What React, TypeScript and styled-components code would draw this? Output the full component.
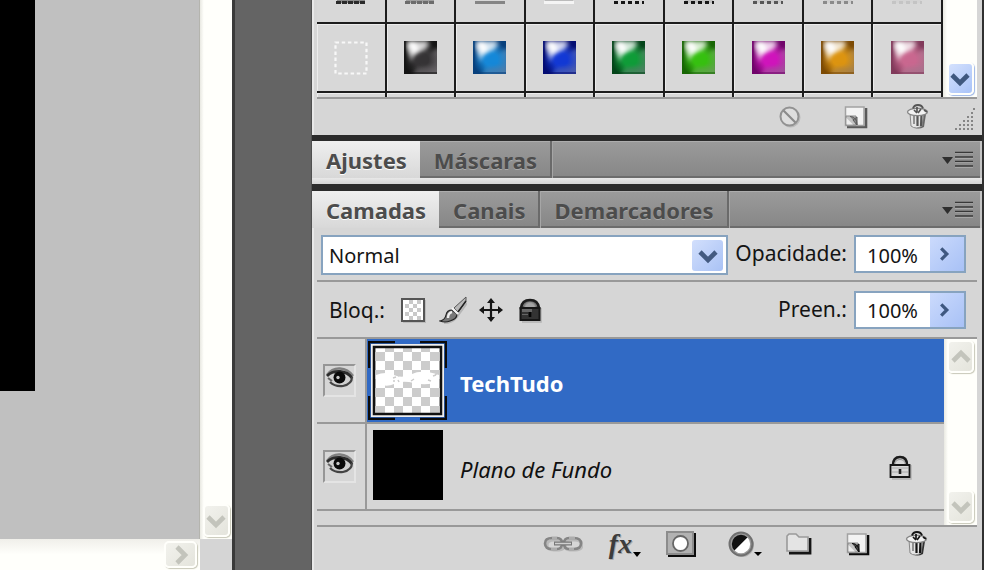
import React from "react";
import styled, { createGlobalStyle, css } from "styled-components";

const GlobalStyle = createGlobalStyle`
  *, *::before, *::after { box-sizing: border-box; }
  body {
    margin: 0;
    background: #646464;
    color: #141414;
    font-family: "Noto Sans", "Open Sans", sans-serif;
    font-size: 20px;
  }
  button, input, select { font: inherit; color: inherit; }
  svg { display: block; flex: none; }
`;

/* ---------- page frame ---------- */

const Page = styled.div`
  display: grid;
  grid-template-columns: minmax(0, 232fr) 80px minmax(0, 672fr);
  min-height: 100vh;
`;

const Workspace = styled.main`
  display: grid;
  grid-template-columns: minmax(0, 1fr) 32px;
  grid-template-rows: minmax(0, 1fr) 31px;
  background: #d5d5d5;
`;

const Canvas = styled.div`
  background: #c0c0c0;
  border-right: 1px solid #b4b4ae;
`;

const Artwork = styled.div`
  width: 35px;
  height: 391px;
  background: #000;
`;

const Gutter = styled.div`
  background: #646464;
  border-left: 3px solid #3a3a3a;
  border-right: 1px solid #505050;
`;

const Dock = styled.aside`
  display: flex;
  flex-direction: column;
  min-width: 0;
  background: #2b2b2b;
  border-right: 2px solid #303030;
`;

/* ---------- scroll bars ---------- */

const ScrollTrack = styled.div<{ $horizontal?: boolean; $end?: "both" }>`
  display: flex;
  flex-direction: ${(p) => (p.$horizontal ? "row" : "column")};
  justify-content: ${(p) => (p.$end ? "space-between" : "flex-end")};
  align-items: center;
  padding: ${(p) => (p.$horizontal ? "0 3px 0 0" : "1px 0 2px")};
  background: ${(p) =>
    p.$horizontal
      ? "linear-gradient(#f0efea, #fffffb 50%)"
      : "linear-gradient(90deg, #e9e9e2, #fffffb 12%, #fffffb)"};
`;

const ScrollButton = styled.button<{ $active?: boolean; $wide?: boolean }>`
  display: grid;
  place-items: center;
  width: ${(p) => (p.$wide ? "33px" : "27px")};
  height: ${(p) => (p.$wide ? "27px" : "33px")};
  padding: 0;
  border: 2px solid #fffffb;
  border-radius: 5px;
  color: ${(p) => (p.$active ? "#3f587f" : "#c3c4bc")};
  background: ${(p) =>
    p.$active
      ? "linear-gradient(135deg, #d4e1fd, #a9c3f8)"
      : "linear-gradient(135deg, #f2f2ed, #e4e4dc)"};
  box-shadow: 1px 1px 1px ${(p) => (p.$active ? "#9db6e6" : "#c8c8b8")};
`;

const turns = { down: 0, left: 90, up: 180, right: 270 };

function Chevron({ to, size = 20 }: { to: keyof typeof turns; size?: number }) {
  return (
    <svg width={size} height={size} viewBox="0 0 20 20" aria-hidden="true">
      <path
        d="M2 6 L10 14 L18 6"
        fill="none"
        stroke="currentColor"
        strokeWidth="4.6"
        transform={`rotate(${turns[to]} 10 10)`}
      />
    </svg>
  );
}

/* ---------- panels and tabs ---------- */

const Panel = styled.section<{ $grow?: boolean; $gap?: number }>`
  display: flex;
  flex-direction: column;
  flex: ${(p) => (p.$grow ? "1" : "none")};
  margin-bottom: ${(p) => p.$gap ?? 0}px;
  background: #d6d6d6;
`;

const PanelBody = styled.div`
  display: flex;
  flex-direction: column;
  flex: 1;
  padding: 0 5px 0 3px;
  border-left: 2px solid #e8e8e8;
`;

const TabBar = styled.div`
  display: flex;
  height: 37px;
  background: linear-gradient(#9b9b9b, #868686);
  border-right: 2px solid #c4c4c4;
  box-shadow: inset 0 1px #adadad, inset 0 -2px #6c6c6c;
`;

const Tab = styled.button<{ $active?: boolean }>`
  padding: 0 13px 0 14px;
  border: 0;
  border-right: 2px solid #6a6a6a;
  background: none;
  color: #4c4c4c;
  font-size: 22px;
  font-weight: 700;
  line-height: 36px;
  white-space: nowrap;
  text-shadow: 0 1px #a9a9a9;
  box-shadow: 1px 0 #a6a6a6;
  ${(p) =>
    p.$active &&
    css`
      border-right: 0;
      background: linear-gradient(#efefef, #d8d8d8);
      text-shadow: 0 1px #fff;
      box-shadow: none;
    `}
`;

const MenuButton = styled.button`
  margin-left: auto;
  padding: 0 7px;
  border: 0;
  background: none;
`;

const CollapsedStrip = styled.div`
  height: 6px;
  background: linear-gradient(#e8e8e8, #d4d4d4);
`;

function TabHeader({ tabs }: { tabs: string[] }) {
  return (
    <TabBar role="tablist">
      {tabs.map((name, i) => (
        <Tab key={name} role="tab" aria-selected={i === 0} $active={i === 0}>
          {name}
        </Tab>
      ))}
      <MenuButton aria-label="Menu do painel">
        <svg width="31" height="18" viewBox="0 0 31 18">
          <path d="M0 6h11l-5.500 7z" fill="#2e2e2e" />
          <path d="M13 2.500h18M13 7h18M13 11.500h18M13 16h18" stroke="#c0c0c0" strokeWidth="1" />
          <path d="M13 1.500h18M13 6h18M13 10.500h18M13 15h18" stroke="#383838" strokeWidth="1.700" />
        </svg>
      </MenuButton>
    </TabBar>
  );
}

/* ---------- styles grid ---------- */

const StylesArea = styled.div`
  display: grid;
  grid-template-columns: minmax(0, 1fr) 34px;
  border-bottom: 2px solid #999;
`;

const SwatchGrid = styled.div`
  display: grid;
  grid-template-columns: repeat(9, minmax(0, 1fr));
  grid-template-rows: 24px 69px 4px;
`;

const Swatch = styled.button<{ $cut?: "top" | "bottom" }>`
  display: flex;
  justify-content: center;
  align-items: ${(p) => (p.$cut === "top" ? "flex-start" : "center")};
  padding: 0;
  border: solid #1c1c1c;
  border-width: ${(p) => (p.$cut === "bottom" ? "0 2px 0 0" : "0 2px 2px 0")};
  background: #d8d8d8;
  box-shadow: inset 1px 1px ${(p) => (p.$cut === "top" ? "#d8d8d8" : "#ececec")};
`;

const gems = [
  { name: "Cinza", mid: "#353335", edge: "#141414", low: "#666366" },
  { name: "Azul", mid: "#1588d8", edge: "#07407c", low: "#4a7cab" },
  { name: "Azul-escuro", mid: "#1238d4", edge: "#030d72", low: "#4a5cae" },
  { name: "Verde", mid: "#0f9c38", edge: "#03451a", low: "#4d8062" },
  { name: "Verde-claro", mid: "#36c010", edge: "#176604", low: "#62a050" },
  { name: "Magenta", mid: "#cf14bb", edge: "#71046b", low: "#a0509a" },
  { name: "Laranja", mid: "#dc9410", edge: "#7d4b04", low: "#a58048" },
  { name: "Rosa", mid: "#c9678f", edge: "#823a5b", low: "#a8728c" },
];

function Gem({ index }: { index: number }) {
  const g = gems[index];
  return (
    <svg width="33" height="33" viewBox="0 0 33 33" aria-hidden="true">
      <defs>
        <radialGradient id={`glow${index}`} cx="0.550" cy="0.560" r="0.550">
          <stop offset="0" stopColor={g.mid} />
          <stop offset="0.350" stopColor={g.mid} />
          <stop offset="1" stopColor={g.mid} stopOpacity="0" />
        </radialGradient>
        <filter id={`soft${index}`} x="-0.300" y="-0.300" width="1.600" height="1.600">
          <feGaussianBlur stdDeviation="2" />
        </filter>
        <clipPath id={`clip${index}`}>
          <path d="M0 0h33v33H0z" />
        </clipPath>
      </defs>
      <g clipPath={`url(#clip${index})`}>
        <path d="M0 0h33v33H0z" fill={g.edge} />
        <g filter={`url(#soft${index})`}>
          <path d="M10 33L16 18 32 8h4v28H8z" fill={g.low} />
          <path d="M2 3h24L20 13l-8 6-5 2z" fill="#fff" opacity="0.650" />
        </g>
        <path d="M0 0h33v33H0z" fill={`url(#glow${index})`} />
        <g filter={`url(#soft${index})`}>
          <path d="M3 0h22l-5 9-9 3-3 6-3-8z" fill="#fff" opacity="0.700" />
          <path d="M3 1h8l5 9-6 4z" fill="#fff" opacity="0.900" />
          <path d="M12 33l4-7h17v7z" fill={g.low} opacity="0.500" />
        </g>
        <path d="M1 0v32h32" fill="none" stroke={g.edge} strokeOpacity="0.550" strokeWidth="2" />
      </g>
    </svg>
  );
}

const fringes = [
  { stroke: "#2a2a2a", dash: "5 1", back: "#8a8a8a" },
  { stroke: "#6c6c6c", dash: "5 1", back: "#a0a0a0" },
  { stroke: "#858585", dash: "30 0", back: "#d8d8d8" },
  { stroke: "#f4f4f4", dash: "30 1", back: "#bbb" },
  { stroke: "#161616", dash: "4 3", back: "#d8d8d8" },
  { stroke: "#161616", dash: "4 3", back: "#c2c2c2" },
  { stroke: "#565656", dash: "4 3", back: "#c9c9c9" },
  { stroke: "#8a8a8a", dash: "4 3", back: "#cfcfcf" },
  { stroke: "#c4c4c4", dash: "4 3", back: "#d4d4d4" },
];

const ToolStrip = styled.div`
  display: flex;
  justify-content: flex-end;
  align-items: center;
  height: 36px;
`;

const IconButton = styled.button<{ $width?: number }>`
  display: grid;
  place-items: center;
  width: ${(p) => p.$width ?? 59}px;
  height: 32px;
  padding: 0;
  border: 0;
  background: none;
`;

/* ---------- icons ---------- */

function NewIcon({ dim }: { dim?: boolean }) {
  const dark = dim ? "#5a5a5a" : "#0c0c0c";
  return (
    <svg width="24" height="24" viewBox="0 0 24 24" aria-hidden="true">
      <path d="M3 22h19V3" fill="none" stroke={dark} strokeWidth="2.600" />
      <path d="M1.500 2h18.500v18.500h-18.500z" fill="#f3f3f3" stroke="#a2a2a2" strokeWidth="1.500" />
      <path d="M2 11h10v9H2z" fill="#c4c4c4" stroke="#888" strokeWidth="1" />
      <path d="M6 11.500q7 0 7 8.500M9 15l4-3v8z" fill={dim ? "#888" : "#444"} stroke={dark} strokeWidth="1" />
      <path d="M2.500 13l6.500 6.500H2.500z" fill="#eee" />
    </svg>
  );
}

function TrashIcon({ dim }: { dim?: boolean }) {
  const dark = dim ? "#555" : "#141414";
  return (
    <svg width="24" height="26" viewBox="0 0 24 26" aria-hidden="true">
      <path d="M7 10l1 13q4 3 10 0l2-13z" fill={dark} opacity="0.850" />
      <path d="M4 9l1 13q5 4 11 0l2-13z" fill="#e4e4e4" stroke="#888" strokeWidth="1" />
      <path d="M8 12v8" stroke="#888" strokeWidth="1.800" />
      <path d="M11.500 12v10M15.500 11l-.5 11" stroke={dark} strokeWidth="2.200" />
      <ellipse cx="11.500" cy="8" rx="10" ry="3.600" fill="#f2f2f2" stroke="#858585" strokeWidth="1.300" />
      <path d="M7 4.500q1-3.500 5-3.500t5 3.500" fill="none" stroke={dark} strokeWidth="2" />
      <path d="M11 3v5M8 6l3 3M15 5l-3 4M18 6l3 2" stroke={dark} strokeWidth="1.700" />
    </svg>
  );
}

function LockIcon({ filled }: { filled?: boolean }) {
  return (
    <svg width="24" height="26" viewBox="0 0 24 26" aria-hidden="true">
      <path d="M4 25h19V11" fill="none" stroke="#b2b2b2" strokeWidth="1.500" />
      <path
        d={filled ? "M3 11Q4 3 12 3t9 8z" : "M5 11Q5 3 12 3t7 8"}
        fill={filled ? "#777" : "none"}
        stroke="#1b1b1b"
        strokeWidth="2.600"
      />
      <path d="M6.500 10.500Q7.500 5.500 12 5.500t5.500 5" fill={filled ? "#a4a4a4" : "none"} stroke="#909090" strokeWidth="1" />
      <path d="M2.500 11h19v12h-19z" fill={filled ? "#333" : "#d8d8d8"} stroke="#161616" strokeWidth={filled ? 2 : 1.8} />
      {filled ? (
        <path d="M4 12h10v3H4zM4 17h6v1H4z" fill="#666" />
      ) : (
        <path d="M4 14h16M4 18h16" stroke="#aaa" strokeWidth="1" />
      )}
      <path d="M12 15v5" stroke={filled ? "#050505" : "#222"} strokeWidth="2.600" />
    </svg>
  );
}

function EyeIcon() {
  return (
    <svg width="28" height="24" viewBox="0 0 28 24" aria-hidden="true">
      <path d="M1 8Q6 1 14 1.500T27 9" fill="none" stroke="#808080" strokeWidth="2.600" />
      <path d="M2 11Q6 5 14 5t12 7q-3 7-11 7.500Q6 20 2 11z" fill="#d0d0d0" />
      <path d="M1 9q5-5 13-4.500T26 11" fill="none" stroke="#2c2c2c" strokeWidth="2.800" />
      <path d="M26 10q0 7-9 9-8 1-13-4" fill="none" stroke="#444" strokeWidth="2.200" />
      <path d="M2 11l4 3" stroke="#666" strokeWidth="2" />
      <circle cx="13.500" cy="10.500" r="6" fill="#0a0a0a" />
      <circle cx="12" cy="10.500" r="1.700" fill="#c8c8c8" />
    </svg>
  );
}

/* ---------- layers panel ---------- */

const OptionRow = styled.div<{ $second?: boolean }>`
  display: flex;
  align-items: ${(p) => (p.$second ? "center" : "flex-start")};
  height: ${(p) => (p.$second ? 57 : 54)}px;
  padding: ${(p) => (p.$second ? "0 11px 0 12px" : "7px 11px 0 4px")};
  border-bottom: 2px solid #999;
`;

const BlendBox = styled.div`
  position: relative;
  flex: 1;
  min-width: 0;
  margin-right: 7px;
`;

const BlendSelect = styled.select`
  appearance: none;
  display: block;
  width: 100%;
  height: 40px;
  padding: 0 44px 0 6px;
  border: 2px solid #87a3bf;
  border-radius: 0;
  background: #fff;
`;

const BlendArrow = styled.span`
  position: absolute;
  top: 5px;
  right: 5px;
  display: grid;
  place-items: center;
  width: 31px;
  height: 31px;
  border-radius: 3px;
  color: #435a80;
  background: linear-gradient(135deg, #d2dffc, #a9c2f5);
  pointer-events: none;
`;

const FieldLabel = styled.label`
  margin-right: 7px;
  font-size: 21px;
  line-height: 37px;
  white-space: nowrap;
`;

const LockLabel = styled.span`
  font-size: 21px;
`;

const Amount = styled.div`
  display: flex;
  flex: none;
  width: 112px;
  height: 38px;
  border: 2px solid #87a3bf;
  background: #fff;
`;

const AmountInput = styled.input`
  flex: 1;
  min-width: 0;
  padding: 2px 0 0 11px;
  border: 0;
  background: none;
`;

const AmountButton = styled.button`
  display: grid;
  place-items: center;
  width: 34px;
  padding: 0 6px 0 0;
  border: 0;
  color: #3f5880;
  background: linear-gradient(135deg, #cbdafc, #a8c1f6);
`;

const LockTools = styled.div`
  display: flex;
  flex: 1;
  gap: 13px;
  margin-left: 15px;
`;

const LockTool = styled.button`
  display: grid;
  place-items: center;
  width: 26px;
  height: 32px;
  padding: 0;
  border: 0;
  background: none;
`;

const LayersArea = styled.div`
  display: grid;
  grid-template-columns: minmax(0, 1fr) 33px;
  border-bottom: 2px solid #999;
`;

const LayerList = styled.ul`
  margin: 0;
  padding: 0 0 14px;
  list-style: none;
`;

const LayerRow = styled.li<{ $selected?: boolean }>`
  display: grid;
  grid-template-columns: 50px 81px minmax(0, 1fr) auto;
  align-items: center;
  height: ${(p) => (p.$selected ? 85 : 87)}px;
  border-bottom: 2px solid #999;
  background: ${(p) =>
    p.$selected
      ? "linear-gradient(90deg, #d6d6d6 50px, #316ac5 50px)"
      : "#d6d6d6"};
`;

const EyeCell = styled.div`
  display: flex;
  align-items: center;
  align-self: stretch;
  padding-left: 6px;
  border-right: 2px solid #999;
`;

const EyeButton = styled.button`
  display: grid;
  place-items: center;
  width: 33px;
  height: 33px;
  padding: 0 0 3px;
  border: 2px solid;
  border-color: #969696 #e4e4e4 #e4e4e4 #969696;
  background: #d6d6d6;
`;

const ThumbCell = styled.div`
  display: grid;
  place-items: center;
`;

const BlackThumb = styled.div`
  width: 70px;
  height: 70px;
  margin-bottom: 3px;
  background: #000;
`;

const LayerName = styled.span<{ $bold?: boolean }>`
  padding-left: 12px;
  padding-top: 4px;
  font-size: 22px;
  line-height: 28px;
  font-weight: ${(p) => (p.$bold ? 700 : 400)};
  font-style: ${(p) => (p.$bold ? "normal" : "italic")};
  color: ${(p) => (p.$bold ? "#fff" : "#101010")};
  white-space: nowrap;
`;

const LockMark = styled.span`
  padding-right: 32px;
`;

const LayerFooter = styled(ToolStrip)`
  flex: 1;
  align-items: flex-start;
  min-height: 43px;
  padding: 1px 31px 0 0;
`;

const FxText = styled.span`
  display: flex;
  align-items: flex-end;
  padding-left: 7px;
  color: #3c3c3c;
  font: italic 700 28px/28px "Liberation Serif", serif;
  text-shadow: 1px 1px #aaa;
`;

function TransparentThumb() {
  return (
    <svg width="79" height="79" viewBox="0 0 79 79" role="img" aria-label="Miniatura transparente">
      <defs>
        <pattern id="checks" width="18" height="18" patternUnits="userSpaceOnUse" x="-1" y="2">
          <path d="M0 0h18v18H0z" fill="#fff" />
          <path d="M0 0h9v9H0zM9 9h9v9H9z" fill="#ccc" />
        </pattern>
      </defs>
      <path d="M27 1H1v26M52 1h26v26M1 55v23h26M52 78h26V55" fill="none" stroke="#0b0b0b" strokeWidth="2.500" />
      <path d="M4 4h71v71H4z" fill="#fff" stroke="#eee" strokeWidth="2" />
      <path d="M6 6h67v67H6z" fill="url(#checks)" stroke="#111" strokeWidth="2.500" />
      <path d="M8 34q10-4 18 0t18-1 27 1v7q-13 4-25 1t-20 1-18-1z" fill="#fff" />
      <path d="M25 37l3-1M30 35l2-1M25 40h2M30 39l1 2M43 40l3-2M60 39l3 1M65 35l3-1M67 34l3-2" stroke="#ccc" strokeWidth="1.500" />
    </svg>
  );
}

const layers = [
  { name: "TechTudo", selected: true },
  { name: "Plano de Fundo", selected: false },
];

export default function App() {
  return (
    <>
      <GlobalStyle />
      <Page>
        <Workspace>
          <Canvas>
            <Artwork />
          </Canvas>
          <ScrollTrack>
            <ScrollButton aria-label="Rolar para baixo">
              <Chevron to="down" />
            </ScrollButton>
          </ScrollTrack>
          <ScrollTrack $horizontal>
            <ScrollButton $wide aria-label="Rolar para a direita">
              <Chevron to="right" />
            </ScrollButton>
          </ScrollTrack>
        </Workspace>
        <Gutter />
        <Dock>
          <Panel $gap={6}>
            <PanelBody>
              <StylesArea>
                <SwatchGrid>
                  {fringes.map((f, i) => (
                    <Swatch key={`t${i}`} $cut="top" aria-label={`Estilo ${i + 1}`}>
                      <svg width="34" height="5" viewBox="0 0 34 5">
                        <path d="M3 0h28v3H3z" fill={f.back} />
                        <path d="M2 2.500h30" stroke={f.stroke} strokeWidth="3" strokeDasharray={f.dash} />
                      </svg>
                    </Swatch>
                  ))}
                  <Swatch aria-label="Tracejado">
                    <svg width="34" height="34" viewBox="0 0 34 34">
                      <path
                        d="M1.500 1.500h31v31h-31z"
                        fill="none"
                        stroke="#f8f8f8"
                        strokeWidth="2.200"
                        strokeDasharray="3.500 2.700"
                      />
                    </svg>
                  </Swatch>
                  {gems.map((g, i) => (
                    <Swatch key={g.name} aria-label={g.name}>
                      <Gem index={i} />
                    </Swatch>
                  ))}
                  {fringes.map((_, i) => (
                    <Swatch key={`b${i}`} $cut="bottom" aria-label={`Estilo ${i + 19}`} />
                  ))}
                </SwatchGrid>
                <ScrollTrack>
                  <ScrollButton $active aria-label="Rolar estilos">
                    <Chevron to="down" />
                  </ScrollButton>
                </ScrollTrack>
              </StylesArea>
              <ToolStrip>
                <IconButton $width={66} aria-label="Limpar estilo">
                  <svg width="24" height="24" viewBox="0 0 24 24">
                    <circle cx="12.500" cy="12.500" r="9" fill="none" stroke="#bbb" strokeWidth="2" />
                    <circle cx="11.500" cy="11.500" r="9" fill="#dedede" stroke="#929292" strokeWidth="2" />
                    <path d="M5.500 5.500l12 12" stroke="#8b8b8b" strokeWidth="2.200" />
                  </svg>
                </IconButton>
                <IconButton $width={66} aria-label="Novo estilo">
                  <NewIcon dim />
                </IconButton>
                <IconButton $width={58} aria-label="Excluir estilo">
                  <TrashIcon dim />
                </IconButton>
                <svg width="30" height="34" viewBox="0 0 30 34" aria-hidden="true">
                  <g fill="none" stroke="#858585" strokeWidth="2" strokeDasharray="2 2">
                    <path d="M8 29h20M12 25h16M16 21h12M20 17h8M24 13h4M26 9h2" />
                  </g>
                </svg>
              </ToolStrip>
            </PanelBody>
          </Panel>

          <Panel $gap={7}>
            <TabHeader tabs={["Ajustes", "Máscaras"]} />
            <CollapsedStrip />
          </Panel>

          <Panel $grow>
            <TabHeader tabs={["Camadas", "Canais", "Demarcadores"]} />
            <PanelBody>
              <OptionRow>
                <BlendBox>
                  <BlendSelect aria-label="Modo de mesclagem" defaultValue="Normal">
                    <option>Normal</option>
                    <option>Dissolver</option>
                  </BlendSelect>
                  <BlendArrow>
                    <Chevron to="down" />
                  </BlendArrow>
                </BlendBox>
                <FieldLabel htmlFor="opacity">Opacidade:</FieldLabel>
                <Amount>
                  <AmountInput id="opacity" defaultValue="100%" />
                  <AmountButton aria-label="Ajustar opacidade">
                    <Chevron to="right" size={14} />
                  </AmountButton>
                </Amount>
              </OptionRow>
              <OptionRow $second>
                <LockLabel>Bloq.:</LockLabel>
                <LockTools>
                  <LockTool aria-label="Bloquear pixels transparentes">
                    <svg width="26" height="26" viewBox="0 0 26 26">
                      <path d="M3 26h23V3" fill="none" stroke="#b4b4b4" strokeWidth="1.500" />
                      <path d="M2 2h22v22H2z" fill="#fff" stroke="#555" strokeWidth="2" />
                      <path
                        d="M9 3h4v4H9zM17 3h4v4h-4zM5 7h4v4H5zM13 7h4v4h-4zM9 11h4v4H9zM17 11h4v4h-4zM5 15h4v4H5zM13 15h4v4h-4zM9 19h4v4H9zM17 19h4v4h-4z"
                        fill="#c9c9c9"
                      />
                    </svg>
                  </LockTool>
                  <LockTool aria-label="Bloquear pixels da imagem">
                    <svg width="28" height="28" viewBox="0 0 28 28">
                      <path d="M5 27q8 0 13-6l10-14" fill="none" stroke="#b5b5b5" strokeWidth="2" />
                      <path d="M27 1L15 12l4 4L27 5z" fill="#b8b8b8" stroke="#555" strokeWidth="1" />
                      <path d="M27 5l-8 11" stroke="#222" strokeWidth="1.600" />
                      <path d="M13 14q-5 0-6 5-1 5-6 6 5 2 10 0 7-2 7-7z" fill="#777" stroke="#222" strokeWidth="1.200" />
                      <path d="M13 16q-4 1-4 6" fill="none" stroke="#eee" strokeWidth="2.400" />
                      <path d="M13 12l6 6" stroke="#f2f2f2" strokeWidth="2.200" />
                    </svg>
                  </LockTool>
                  <LockTool aria-label="Bloquear posição">
                    <svg width="26" height="26" viewBox="0 0 26 26">
                      <path d="M13 3v20M3 13h20" stroke="#161616" strokeWidth="2.200" />
                      <path
                        d="M13 1l4 5h-8zM13 25l4-5h-8zM1 13l5-4v8zM25 13l-5-4v8z"
                        fill="#161616"
                      />
                    </svg>
                  </LockTool>
                  <LockTool aria-label="Bloquear tudo">
                    <LockIcon filled />
                  </LockTool>
                </LockTools>
                <FieldLabel htmlFor="fill">Preen.:</FieldLabel>
                <Amount>
                  <AmountInput id="fill" defaultValue="100%" />
                  <AmountButton aria-label="Ajustar preenchimento">
                    <Chevron to="right" size={14} />
                  </AmountButton>
                </Amount>
              </OptionRow>

              <LayersArea>
                <LayerList>
                  {layers.map((layer) => (
                    <LayerRow key={layer.name} $selected={layer.selected}>
                      <EyeCell>
                        <EyeButton aria-label={`Visibilidade de ${layer.name}`}>
                          <EyeIcon />
                        </EyeButton>
                      </EyeCell>
                      <ThumbCell>{layer.selected ? <TransparentThumb /> : <BlackThumb />}</ThumbCell>
                      <LayerName $bold={layer.selected}>{layer.name}</LayerName>
                      {!layer.selected && (
                        <LockMark>
                          <LockIcon />
                        </LockMark>
                      )}
                    </LayerRow>
                  ))}
                </LayerList>
                <ScrollTrack $end="both">
                  <ScrollButton aria-label="Rolar camadas para cima">
                    <Chevron to="up" />
                  </ScrollButton>
                  <ScrollButton aria-label="Rolar camadas para baixo">
                    <Chevron to="down" />
                  </ScrollButton>
                </ScrollTrack>
              </LayersArea>

              <LayerFooter>
                <IconButton aria-label="Vincular camadas">
                  <svg width="40" height="18" viewBox="0 0 40 18">
                    <g fill="none">
                      <path d="M10 4h5q5 0 5 5t-5 5h-5q-7 0-7-5t7-5zM26 4h5q7 0 7 5t-7 5h-5q-5 0-5-5t5-5z" stroke="#bababa" strokeWidth="3" transform="translate(1 1)" />
                      <path d="M9 3h5q5 0 5 5.500T14 14H9Q2 14 2 8.500T9 3zM26 3h5q7 0 7 5.500T31 14h-5q-5 0-5-5.500T26 3z" stroke="#858585" strokeWidth="2.600" />
                      <path d="M9 3h5M26 3h6M8 14h6M26 14h5" stroke="#d5d5d5" strokeWidth="1" />
                      <path d="M11 8.500h18" stroke="#777" strokeWidth="4" />
                      <path d="M12 8.500h16" stroke="#d0d0d0" strokeWidth="1.500" />
                    </g>
                  </svg>
                </IconButton>
                <IconButton aria-label="Adicionar estilo de camada">
                  <FxText>
                    fx
                    <svg width="9" height="6" viewBox="0 0 9 6">
                      <path d="M1 0h8L5 5z" fill="#000" />
                    </svg>
                  </FxText>
                </IconButton>
                <IconButton aria-label="Adicionar máscara">
                  <svg width="30" height="26" viewBox="0 0 30 26">
                    <path d="M2 24.500h27V2" fill="none" stroke="#0c0c0c" strokeWidth="2.800" />
                    <path d="M1 1h26v22H1z" fill="#b2b2b2" stroke="#8c8c8c" strokeWidth="2" />
                    <circle cx="14.500" cy="12.500" r="7.500" fill="#fff" stroke="#666" strokeWidth="1.800" />
                  </svg>
                </IconButton>
                <IconButton aria-label="Nova camada de ajuste">
                  <svg width="46" height="28" viewBox="0 0 46 28">
                    <circle cx="25" cy="15" r="12" fill="#adadad" />
                    <circle cx="24" cy="14" r="11.500" fill="#999" stroke="#707070" strokeWidth="2" />
                    <path d="M17.500 20.500A9 9 0 0 1 30.500 7.500z" fill="#111" />
                    <path d="M17.500 20.500A9 9 0 0 0 30.500 7.500z" fill="#fff" />
                    <path d="M37 22h8l-4 4z" fill="#000" />
                  </svg>
                </IconButton>
                <IconButton aria-label="Novo grupo">
                  <svg width="26" height="22" viewBox="0 0 26 22">
                    <path d="M3 20h21V5" fill="none" stroke="#151515" strokeWidth="2.800" />
                    <path d="M1 18V3l2-2h7l3 3h9v14z" fill="#e4e4e4" stroke="#9a9a9a" strokeWidth="1.600" />
                  </svg>
                </IconButton>
                <IconButton aria-label="Nova camada">
                  <NewIcon />
                </IconButton>
                <IconButton aria-label="Excluir camada">
                  <TrashIcon />
                </IconButton>
              </LayerFooter>
            </PanelBody>
          </Panel>
        </Dock>
      </Page>
    </>
  );
}
